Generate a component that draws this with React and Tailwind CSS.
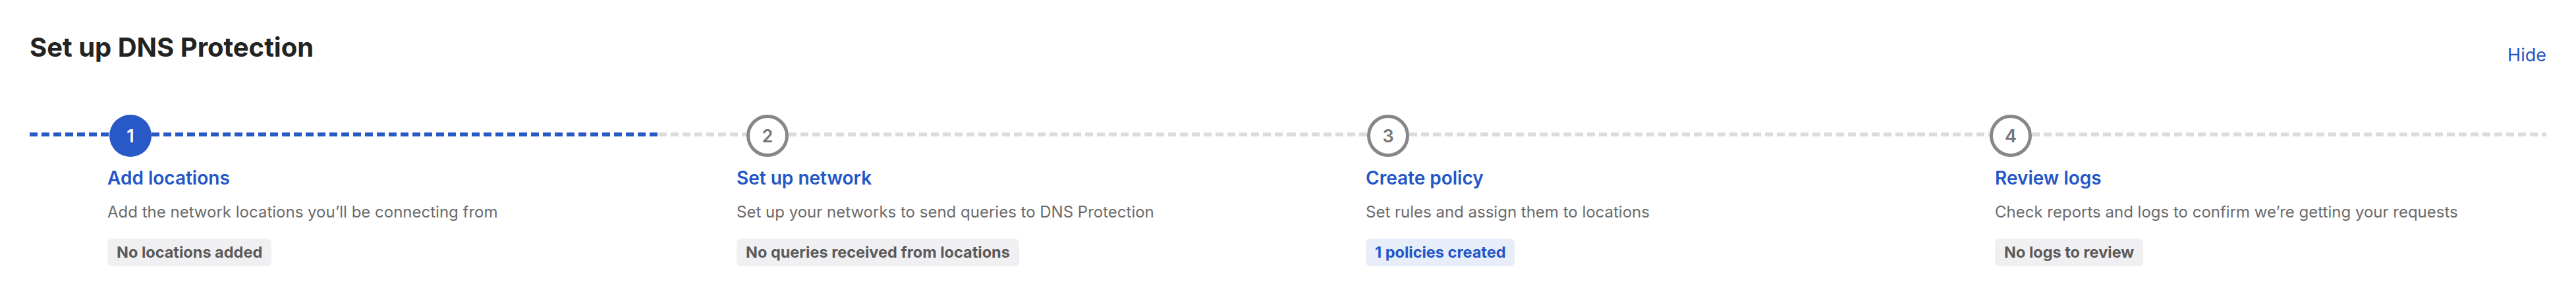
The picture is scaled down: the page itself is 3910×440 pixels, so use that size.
import React from "react";

const steps = [
  {
    n: 1,
    title: "Add locations",
    desc: "Add the network locations you’ll be connecting from",
    badge: "No locations added",
    done: true,
    lead: "w-[121px]",
  },
  {
    n: 2,
    title: "Set up network",
    desc: "Set up your networks to send queries to DNS Protection",
    badge: "No queries received from locations",
    lead: "w-[133px]",
  },
  {
    n: 3,
    title: "Create policy",
    desc: "Set rules and assign them to locations",
    badge: "1 policies created",
    badgeBlue: true,
    lead: "w-[120px]",
  },
  {
    n: 4,
    title: "Review logs",
    desc: "Check reports and logs to confirm we’re getting your requests",
    badge: "No logs to review",
    lead: "w-[110px]",
  },
];

function Dashes({ active, className = "" }) {
  return (
    <div
      className={`mt-[27px] h-[6px] self-start ${className} ${
        active
          ? "bg-[repeating-linear-gradient(90deg,#2958c7_0_12px,transparent_12px_18px)]"
          : "bg-[repeating-linear-gradient(90deg,#dcdcdf_0_12px,transparent_12px_18px)]"
      }`}
    />
  );
}

function Step({ step }) {
  return (
    <div className="flex flex-col">
      <div className="flex h-[64px] items-start">
        <Dashes active={step.done} className={`shrink-0 ${step.lead}`} />
        {step.done ? (
          <div className="flex h-[64px] w-[64px] shrink-0 items-center justify-center rounded-full bg-[#2958c7] text-[27px] font-semibold leading-none text-white">
            {step.n}
          </div>
        ) : (
          <div className="flex h-[64px] w-[64px] shrink-0 items-center justify-center rounded-full border-[5px] border-[#878787] bg-white text-[27px] font-semibold leading-none text-[#777777]">
            {step.n}
          </div>
        )}
        <Dashes active={step.done} className="flex-1" />
      </div>

      <div className="pl-[118px]">
        <div className="mt-[18px] text-[28px] font-semibold leading-none text-[#2356c6]">
          {step.title}
        </div>
        <div className="mt-[26px] text-[24px] leading-none text-[#6b6b6b]">
          {step.desc}
        </div>
        <div className="mt-[28px] flex">
          <span
            className={`flex h-[42px] items-center rounded-[7px] px-[14px] text-[23.5px] font-bold ${
              step.badgeBlue
                ? "bg-[#e7eef9] text-[#2356c6]"
                : "bg-[#f0f0f2] text-[#5a5a5a]"
            }`}
          >
            {step.badge}
          </span>
        </div>
      </div>
    </div>
  );
}

export default function App() {
  return (
    <div className="h-[440px] w-[3910px] bg-white px-[45px] pt-[52px] font-['Inter',sans-serif]">
      <div className="flex items-start justify-between">
        <h1 className="text-[40px] font-bold leading-none text-[#232323]">
          Set up DNS Protection
        </h1>
        <button className="mt-[18px] text-[27px] leading-none text-[#2356c6]">
          Hide
        </button>
      </div>

      <div className="mt-[77px] grid grid-cols-4">
        {steps.map((step) => (
          <Step key={step.n} step={step} />
        ))}
      </div>
    </div>
  );
}
